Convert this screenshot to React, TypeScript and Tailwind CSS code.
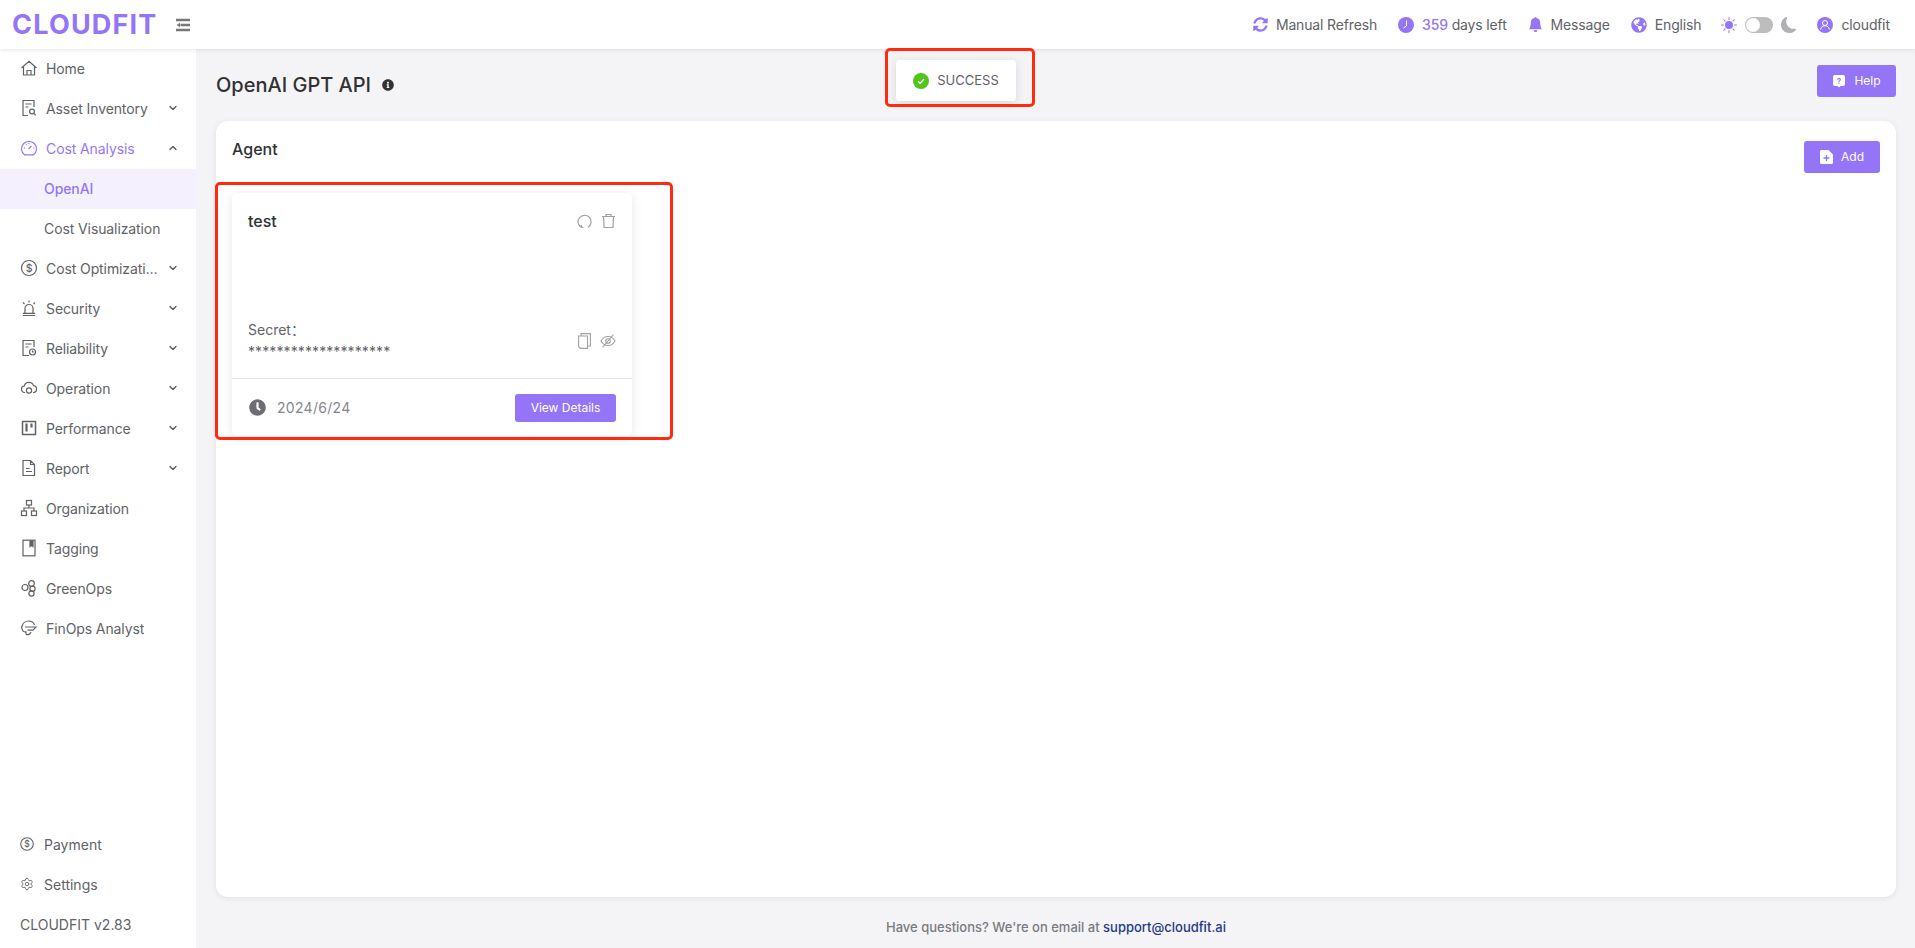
import { ChevronDown, ChevronUp, Settings } from 'lucide-react';
import type { ComponentType, ReactNode } from 'react';
import { BsBellFill, BsMoonFill, BsSunFill } from 'react-icons/bs';
import { FaClock, FaGlobeAmericas, FaInfoCircle, FaSyncAlt } from 'react-icons/fa';

type IconProps = { className?: string };

function Line({ className, children }: IconProps & { children: ReactNode }) {
  return (
    <svg width="18" height="18" viewBox="0 0 18 18" fill="none" stroke="currentColor" strokeWidth="1.2" className={className}>
      {children}
    </svg>
  );
}

const HomeIcon = (p: IconProps) => (
  <Line {...p}><path d="M1.500 9 9 2.200 16.500 9M3.500 7.500v8.500h11V7.500M7 16v-4.500h4V16" /></Line>
);
const AssetIcon = (p: IconProps) => (
  <Line {...p}>
    <path d="M14 8V1.500H3v15h5M5.500 5h6M5.500 8h3" />
    <circle cx="12" cy="12.500" r="2.400" />
    <path d="m13.800 14.300 2 2" />
  </Line>
);
const GaugeIcon = (p: IconProps) => (
  <Line {...p}>
    <path d="M4.500 15.800a7.500 7.500 0 1 1 9 0z" />
    <path d="m8.500 10 3-3M3.800 9H5M13 9h1.200M6 5.500l.7.700M9 4v1" />
  </Line>
);
const DollarIcon = (p: IconProps) => (
  <Line {...p}>
    <circle cx="9" cy="9" r="7.500" />
    <text x="9" y="12.800" textAnchor="middle" fontSize="10.500" fontWeight="500" fill="currentColor" stroke="none">$</text>
  </Line>
);
const SirenIcon = (p: IconProps) => (
  <Line {...p}>
    <path d="M5 14V9.500a4 4 0 0 1 8 0V14M2.800 14.300h12.400M2.800 16.500h12.400M9 1.500v2M3 3.500l1.500 1.500M15 3.500 13.500 5" />
  </Line>
);
const ReliabilityIcon = (p: IconProps) => (
  <Line {...p}>
    <path d="M14 8V1.500H3v15h6M5.500 5h6M5.500 8h3" />
    <circle cx="12.500" cy="13" r="3" />
    <path d="M12.500 11.500V13h1.300" />
  </Line>
);
const CloudIcon = (p: IconProps) => (
  <Line {...p}>
    <path d="M5 13.500H4.500A3.200 3.200 0 0 1 1.500 10 3 3 0 0 1 4.300 7 4.800 4.800 0 0 1 13.500 6.600 3.300 3.300 0 0 1 16.500 10a3.300 3.300 0 0 1-3 3.500H13" />
    <circle cx="9" cy="11.500" r="2.600" />
  </Line>
);
const BoardIcon = (p: IconProps) => (
  <Line {...p}>
    <rect x="2.500" y="2.500" width="13" height="13" strokeWidth="1.500" />
    <path d="M6.500 4.500v8M11.500 4.500v4" strokeWidth="2.200" />
  </Line>
);
const ReportIcon = (p: IconProps) => (
  <Line {...p}>
    <path d="M3 1.500h7.500l4 4v11H3zM10.500 1.500v4h4M6 9.500h3.500M6 12.500h6" />
  </Line>
);
const OrgIcon = (p: IconProps) => (
  <Line {...p}>
    <rect x="6.500" y="1.500" width="5" height="4.500" />
    <rect x="1.500" y="12" width="5" height="4.500" />
    <rect x="11.500" y="12" width="5" height="4.500" />
    <path d="M9 6v3M4 12V9h10v3" />
  </Line>
);
const TagIcon = (p: IconProps) => (
  <Line {...p}>
    <rect x="3" y="1.200" width="12" height="15.600" />
    <path d="M10 1.500v6l1.500-1.200L13 7.500v-6" fill="currentColor" />
  </Line>
);
const GreenIcon = (p: IconProps) => (
  <Line {...p}>
    <circle cx="5" cy="8.500" r="3" />
    <circle cx="11.500" cy="4.500" r="2.800" />
    <circle cx="12.500" cy="9.800" r="2.600" />
    <circle cx="11.500" cy="14.500" r="2.600" />
  </Line>
);
const AnalystIcon = (p: IconProps) => (
  <Line {...p}>
    <path d="M6 15.500v-2.600A3.800 3.800 0 0 1 2 9.500c-.8-.6-.6-2 .3-2.400C2.700 4 5.500 2 8.500 2c3 0 5.300 1.600 6 4" />
    <path d="M6 15.500c2.300.6 4 .2 5-2.500M5 8h11l-3 3.200H7.500" />
  </Line>
);

function SmallClock() {
  return (
    <svg width="16" height="16" viewBox="0 0 16 16">
      <circle cx="8" cy="8" r="8" fill="#9575f7" />
      <path d="M8.500 3.500V9L5.500 11" fill="none" stroke="#fff" strokeWidth="1" />
    </svg>
  );
}

function UserBadge() {
  return (
    <svg width="16" height="16" viewBox="0 0 16 16">
      <circle cx="8" cy="8" r="8" fill="#9575f7" />
      <circle cx="8" cy="6" r="2.500" fill="none" stroke="#fff" strokeWidth="1" />
      <path d="M3.500 12.500c.6-2.600 2.200-3.700 4.500-3.700s3.900 1.100 4.500 3.700" fill="none" stroke="#fff" strokeWidth="1" />
    </svg>
  );
}

function HelpIcon() {
  return (
    <svg width="14" height="14" viewBox="0 0 14 14">
      <path d="M3 1h8a2 2 0 0 1 2 2v7a2 2 0 0 1-2 2H8.500L7 13.500 5.500 12H3a2 2 0 0 1-2-2V3a2 2 0 0 1 2-2z" fill="#fff" />
      <text x="7" y="9.800" textAnchor="middle" fontSize="8" fontWeight="700" fill="#9575f7">?</text>
    </svg>
  );
}

function AddFileIcon() {
  return (
    <svg width="13" height="14" viewBox="0 0 13 14">
      <path d="M1.500 0H8.500L13 4.500V12.500A1.500 1.500 0 0 1 11.500 14H1.500A1.500 1.500 0 0 1 0 12.500V1.500A1.500 1.500 0 0 1 1.500 0z" fill="#fff" />
      <path d="M6.500 5v6M3.500 8h6" stroke="#9575f7" strokeWidth="1.300" />
    </svg>
  );
}

type MenuEntry = { label: string; icon: ComponentType<IconProps>; arrow?: boolean };

const topItems: MenuEntry[] = [
  { label: 'Home', icon: HomeIcon },
  { label: 'Asset Inventory', icon: AssetIcon, arrow: true },
];

const restItems: MenuEntry[] = [
  { label: 'Cost Optimization', icon: DollarIcon, arrow: true },
  { label: 'Security', icon: SirenIcon, arrow: true },
  { label: 'Reliability', icon: ReliabilityIcon, arrow: true },
  { label: 'Operation', icon: CloudIcon, arrow: true },
  { label: 'Performance', icon: BoardIcon, arrow: true },
  { label: 'Report', icon: ReportIcon, arrow: true },
  { label: 'Organization', icon: OrgIcon },
  { label: 'Tagging', icon: TagIcon },
  { label: 'GreenOps', icon: GreenIcon },
  { label: 'FinOps Analyst', icon: AnalystIcon },
];

function MenuRow({ item }: { item: MenuEntry }) {
  const Icon = item.icon;
  return (
    <div className="flex h-10 items-center pb-[2px] pl-5 pr-[17px] tracking-[-0.1px] text-[#606266]">
      <Icon className="mr-2 shrink-0" />
      <span className="min-w-0 max-w-[113px] truncate">{item.label}</span>
      {item.arrow && <ChevronDown size={12} strokeWidth={2.5} className="ml-auto shrink-0 text-[#555]" />}
    </div>
  );
}

function HeaderItem({ icon, children }: { icon: ReactNode; children: ReactNode }) {
  return (
    <div className="flex items-center gap-2 text-[14px] tracking-[-0.15px] text-[#606266]">
      {icon}
      <span>{children}</span>
    </div>
  );
}

export default function App() {
  return (
    <div className="relative flex h-screen flex-col overflow-hidden bg-[#f4f4f7] font-['Inter','Noto_Sans_CJK_SC',sans-serif] text-[14px]">
      {/* top bar */}
      <header className="z-10 flex h-[49px] shrink-0 items-center bg-white pl-3 pr-[25px] shadow-[0_1px_4px_rgba(0,0,0,0.1)]">
        <span className="w-[163px] text-[27px] font-bold leading-none tracking-[1.2px] text-[#9575f7]">CLOUDFIT</span>
        <svg width="16" height="14" viewBox="0 0 16 14" className="text-[#777]">
          <path d="M1 2h14M5.500 7H15M1 12h14" stroke="currentColor" strokeWidth="2.400" />
          <path d="M1.500 7 5 4.800v4.400z" fill="currentColor" />
        </svg>
        <div className="ml-auto flex items-center">
          <HeaderItem icon={<FaSyncAlt size={15} className="text-[#9575f7]" />}>Manual Refresh</HeaderItem>
          <div className="ml-[21px]">
            <HeaderItem icon={<SmallClock />}>
              <span className="font-medium text-[#9575f7]">359</span> days left
            </HeaderItem>
          </div>
          <div className="ml-[21px]">
            <HeaderItem icon={<BsBellFill size={15} className="text-[#9575f7]" />}>Message</HeaderItem>
          </div>
          <div className="ml-[21px]">
            <HeaderItem icon={<FaGlobeAmericas size={16} className="text-[#9575f7]" />}>English</HeaderItem>
          </div>
          <BsSunFill size={16} className="ml-5 text-[#9575f7]" />
          <div className="relative ml-2 h-[16px] w-[28px] rounded-full bg-[#bdbdbd]">
            <div className="absolute left-[1px] top-[1px] h-[14px] w-[14px] rounded-full bg-white" />
          </div>
          <BsMoonFill size={16} className="ml-2 text-[#b0b0b4]" />
          <div className="ml-5">
            <HeaderItem icon={<UserBadge />}>cloudﬁt</HeaderItem>
          </div>
        </div>
      </header>

      <div className="flex min-h-0 flex-1">
        {/* side menu */}
        <aside className="flex w-[196px] shrink-0 flex-col bg-white pb-1">
          {topItems.map((item) => <MenuRow key={item.label} item={item} />)}
          <div className="flex h-10 items-center pb-[2px] pl-5 pr-[17px] tracking-[-0.1px] text-[#9575f7]">
            <GaugeIcon className="mr-2 shrink-0" />
            <span className="flex-1">Cost Analysis</span>
            <ChevronUp size={12} strokeWidth={2.5} className="text-[#555]" />
          </div>
          <div className="flex h-10 items-center bg-[#f5f0fe] pb-[2px] pl-11 font-medium tracking-[-0.1px] text-[#9575f7]">OpenAI</div>
          <div className="flex h-10 items-center pb-[2px] pl-11 tracking-[-0.1px] text-[#606266]">Cost Visualization</div>
          {restItems.map((item) => <MenuRow key={item.label} item={item} />)}
          <div className="mt-auto">
            <div className="flex h-10 items-center gap-[10px] pl-5 text-[#606266]">
              <svg width="14" height="14" viewBox="0 0 14 14" fill="none" stroke="currentColor" strokeWidth="1.100">
                <circle cx="7" cy="7" r="6.300" />
                <text x="7" y="10" textAnchor="middle" fontSize="8.500" fontWeight="500" fill="currentColor" stroke="none">$</text>
              </svg>
              Payment
            </div>
            <div className="flex h-10 items-center gap-[10px] pl-5 text-[#606266]">
              <Settings size={14} strokeWidth={1.5} />
              Settings
            </div>
            <div className="flex h-10 items-center pl-5 text-[#606266]">CLOUDFIT v2.83</div>
          </div>
        </aside>

        {/* content */}
        <main className="flex min-w-0 flex-1 flex-col pl-5 pr-[19px]">
          <div className="flex h-[72px] shrink-0 items-center">
            <h1 className="text-[20px] font-medium leading-none text-[#303133]">OpenAI GPT API</h1>
            <FaInfoCircle size={12} className="ml-[11px] text-[#303133]" />
            <button className="mb-[8px] ml-auto flex h-8 w-[79px] items-center justify-center gap-2 rounded-[3px] bg-[#9575f7] text-[12px] text-white">
              <HelpIcon />
              Help
            </button>
          </div>
          <section className="h-[776px] shrink-0 rounded-xl bg-white px-4 pt-4 shadow-[0_1px_6px_rgba(0,0,0,0.08)]">
            <div className="mb-5 flex items-start justify-between">
              <h2 className="text-[16px] font-medium leading-6 text-[#303133]">Agent</h2>
              <button className="mt-1 flex h-8 w-[76px] items-center justify-center gap-2 rounded-[3px] bg-[#9575f7] text-[12px] text-white">
                <AddFileIcon />
                Add
              </button>
            </div>
            <div className="flex h-[243px] w-[400px] flex-col rounded-md bg-white shadow-[0_2px_12px_rgba(0,0,0,0.1)]">
              <div className="flex h-[186px] flex-col justify-between border-b border-[#e4e4e7] px-4 pb-[17px] pt-4">
                <div className="flex items-center justify-between">
                  <span className="text-[16px] font-medium text-[#303133]">test</span>
                  <div className="flex items-center gap-[9px] text-[#a0a0a4]">
                    <svg width="15" height="15" viewBox="0 0 15 15" fill="none" stroke="currentColor" strokeWidth="1.200">
                      <path d="M4.500 13.500A6.500 6.500 0 1 1 11 13.300M4.500 13.500l-.3-2.500M4.500 13.500l2-.5" />
                    </svg>
                    <svg width="15" height="16" viewBox="0 0 15 16" fill="none" stroke="currentColor" strokeWidth="1.200">
                      <path d="M1 3.500h13M5 3.500v-2h5v2M2.500 3.500l.5 11h9l.5-11" />
                    </svg>
                  </div>
                </div>
                <div className="flex items-center justify-between">
                  <div className="text-[#606266]">
                    <div className="mb-1 leading-[18px]">Secret：</div>
                    <div className="leading-[18px] tracking-[0.1px]">********************</div>
                  </div>
                  <div className="flex items-center gap-[9px] text-[#a0a0a4]">
                    <svg width="13" height="16" viewBox="0 0 13 16" fill="none" stroke="currentColor" strokeWidth="1.100">
                      <path d="M3 3V.6h9.400v12.400H9.500M.6 3h8.900v12.400H2.600L.6 13.400z" />
                    </svg>
                    <svg width="16" height="16" viewBox="0 0 16 16" fill="none" stroke="currentColor" strokeWidth="1.100">
                      <path d="M1 8s2.500-4.500 7-4.500S15 8 15 8s-2.500 4.500-7 4.500S1 8 1 8zM13.500 1.500 2.500 14.500" />
                      <circle cx="8" cy="8" r="2.300" />
                    </svg>
                  </div>
                </div>
              </div>
              <div className="flex flex-1 items-center justify-between px-4">
                <div className="flex items-center gap-[11px] pl-[1px] tracking-[0.3px] text-[#86868a]">
                  <FaClock size={17} className="text-[#6e6e72]" />
                  2024/6/24
                </div>
                <button className="flex h-[28px] w-[101px] items-center justify-center rounded-[3px] bg-[#9575f7] text-[12px] text-white">View Details</button>
              </div>
            </div>
          </section>
          <footer className="flex flex-1 items-center justify-center pt-[11px] text-[13px] font-medium text-[#7a7a80]">
            <span>Have questions? We're on email at <span className="text-[#1e3a8a]">support@cloudﬁt.ai</span></span>
          </footer>
        </main>
      </div>

      {/* toast */}
      <div className="absolute left-[896px] top-[60px] z-20 flex h-[41px] w-[120px] items-center justify-center gap-2 rounded-[4px] bg-white text-[13px] text-[#606266] shadow-[0_2px_10px_rgba(0,0,0,0.12)]">
        <svg width="16" height="16" viewBox="0 0 16 16">
          <circle cx="8" cy="8" r="8" fill="#52c41a" />
          <path d="M5 8.200 7.200 10.300 11 6" fill="none" stroke="#fff" strokeWidth="1.200" />
        </svg>
        SUCCESS
      </div>

      {/* red annotation boxes */}
      <div className="pointer-events-none absolute left-[885px] top-[48px] z-30 h-[59px] w-[150px] rounded-[5px] border-[3px] border-[#ff2a10]" />
      <div className="pointer-events-none absolute left-[215px] top-[182px] z-30 h-[258px] w-[458px] rounded-[5px] border-[3px] border-[#ff2a10]" />
    </div>
  );
}
